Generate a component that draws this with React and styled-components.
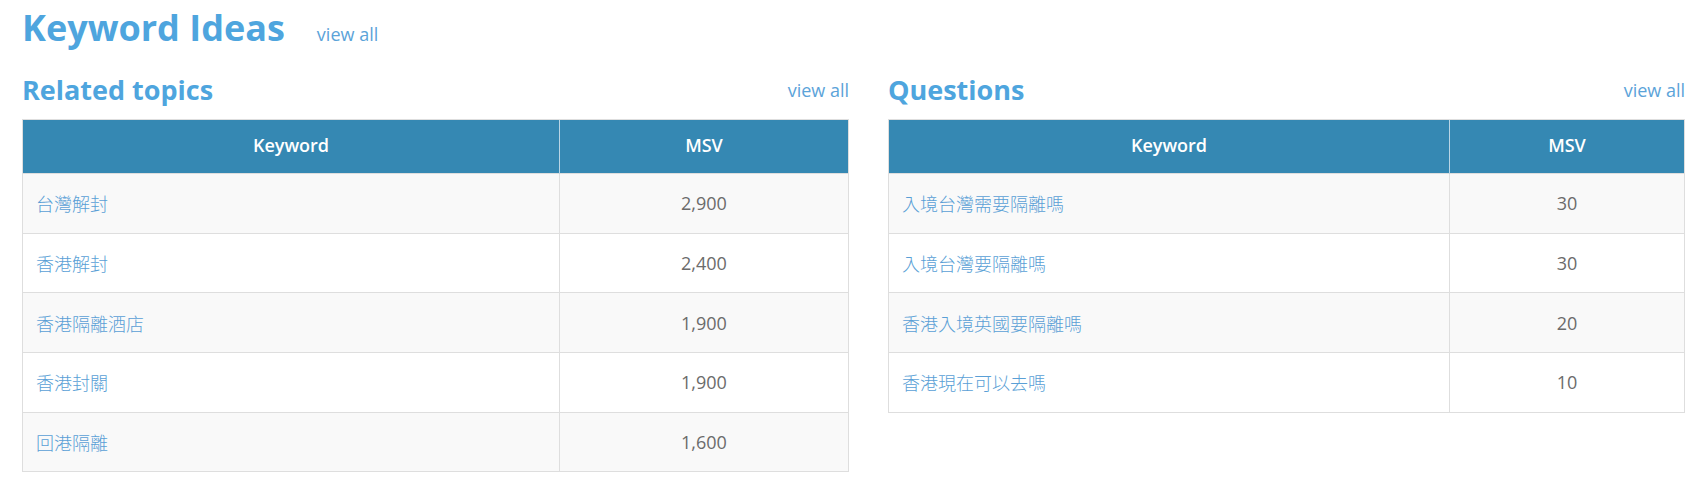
import React from 'react';
import styled, { createGlobalStyle } from 'styled-components';

const GlobalStyle = createGlobalStyle`
  body {
    margin: 0;
    background: #fff;
    font-family: "Open Sans", "Noto Sans CJK TC", sans-serif;
  }
`;

const Page = styled.div`
  padding: 6px 15px 0 22px;
`;

const TitleRow = styled.div`
  display: flex;
  align-items: baseline;
  gap: 32px;
`;

const Title = styled.h1`
  margin: 0;
  font-size: 36px;
  line-height: 44px;
  font-weight: 700;
  color: #4ea5de;
`;

const ViewAll = styled.a`
  font-size: 18px;
  line-height: 24px;
  color: #5ba3d9;
  text-decoration: none;
  margin-top: ${props => props.offset || 0}px;
`;

const Columns = styled.div`
  display: grid;
  grid-template-columns: 827px 797px;
  column-gap: 39px;
  margin-top: 22px;
  align-items: start;
`;

const SectionHead = styled.div`
  display: flex;
  justify-content: space-between;
  align-items: flex-start;
  margin-bottom: 11px;
`;

const SectionTitle = styled.h2`
  margin: 0;
  font-size: 27px;
  line-height: 36px;
  font-weight: 700;
  color: #4ea5de;
`;

const Table = styled.table`
  width: 100%;
  border-collapse: collapse;
  border: 1px solid #dedede;
  table-layout: fixed;
`;

const HeadCell = styled.th`
  background: #3588b3;
  color: #fff;
  font-size: 18px;
  font-weight: 600;
  height: 49px;
  padding: 0 13px 4px;
  text-align: center;
  border-left: 1px solid #b9d5e5;
  border-top: 1px solid #dedede;
  width: ${props => props.width || 'auto'};
  &:first-child {
    border-left: none;
  }
`;

const Row = styled.tr`
  background: ${props => (props.striped ? '#f9f9f9' : '#fff')};
  height: 59.7px;
`;

const KeywordCell = styled.td`
  border: 1px solid #dedede;
  padding: 0 13px;
  font-size: 18px;
  font-weight: 300;
  color: #5a9fd6;
`;

const ValueCell = styled.td`
  border: 1px solid #dedede;
  padding: 0 13px;
  text-align: center;
  font-size: 18px;
  color: #6b6b6b;
`;

const related = [
  { kw: '台灣解封', msv: '2,900' },
  { kw: '香港解封', msv: '2,400' },
  { kw: '香港隔離酒店', msv: '1,900' },
  { kw: '香港封關', msv: '1,900' },
  { kw: '回港隔離', msv: '1,600' },
];

const questions = [
  { kw: '入境台灣需要隔離嗎', msv: '30' },
  { kw: '入境台灣要隔離嗎', msv: '30' },
  { kw: '香港入境英國要隔離嗎', msv: '20' },
  { kw: '香港現在可以去嗎', msv: '10' },
];

const KeywordSection = ({ title, rows, msvWidth }) => (
  <div>
    <SectionHead>
      <SectionTitle>{title}</SectionTitle>
      <ViewAll href="#" offset={6}>view all</ViewAll>
    </SectionHead>
    <Table>
      <thead>
        <tr>
          <HeadCell>Keyword</HeadCell>
          <HeadCell width={msvWidth}>MSV</HeadCell>
        </tr>
      </thead>
      <tbody>
        {rows.map((row, i) => (
          <Row key={row.kw} striped={i % 2 === 0}>
            <KeywordCell>{row.kw}</KeywordCell>
            <ValueCell>{row.msv}</ValueCell>
          </Row>
        ))}
      </tbody>
    </Table>
  </div>
);

const App = () => (
  <Page>
    <GlobalStyle />
    <TitleRow>
      <Title>Keyword Ideas</Title>
      <ViewAll href="#">view all</ViewAll>
    </TitleRow>
    <Columns>
      <KeywordSection title="Related topics" rows={related} msvWidth="262px" />
      <KeywordSection title="Questions" rows={questions} msvWidth="208px" />
    </Columns>
  </Page>
);

export default App;
